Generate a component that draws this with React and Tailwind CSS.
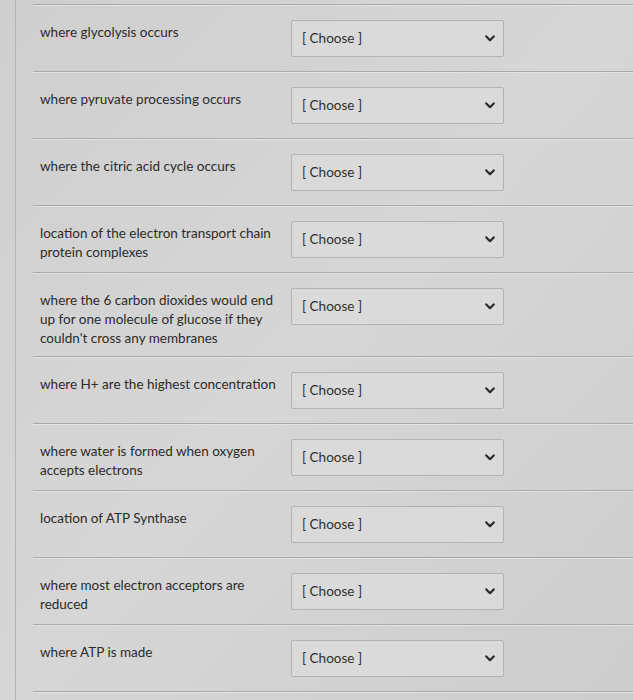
import React from 'react';

const questions = [
    'where glycolysis occurs',
    'where pyruvate processing occurs',
    'where the citric acid cycle occurs',
    'location of the electron transport chain protein complexes',
    "where the 6 carbon dioxides would end up for one molecule of glucose if they couldn't cross any membranes",
    'where H+ are the highest concentration',
    'where water is formed when oxygen accepts electrons',
    'location of ATP Synthase',
    'where most electron acceptors are reduced',
    'where ATP is made',
];

const Chevron = () => (
    <svg width="10" height="7" viewBox="0 0 10 7" className="shrink-0">
        <path d="M1.3 1.4 L5 5.2 L8.7 1.4" fill="none" stroke="#2a2a2a" strokeWidth="2.2" strokeLinecap="round" strokeLinejoin="round" />
    </svg>
);

const Row = ({ label }) => (
    <div className="flex items-start min-h-[67px] pt-[15px] pb-[8px] pl-[7px] border-b border-[#a9a9a9] shadow-[0_1px_0_#e4e4e4]">
        <div className="w-[246px] pt-[3px] pr-1 text-[13.5px] leading-[19px] text-[#2b2b2b]">{label}</div>
        <div className="ml-[5px] w-[213px] h-[37px] flex items-center justify-between pl-[10px] pr-[8px] border border-[#b3b3b3] bg-[#dadada] rounded-[2px] text-[13.5px] text-[#2f2f2f]">
            <span>[ Choose ]</span>
            <Chevron />
        </div>
    </div>
);

export default function App() {
    return (
        <div className="w-[633px] h-[700px] overflow-hidden bg-gradient-to-br from-[#cfcfcf] via-[#d6d6d6] to-[#cdcdcd]" style={{ fontFamily: 'Lato, "Open Sans", sans-serif' }}>
            <div className="ml-[15px] h-full border-l border-[#b4b4b4] pl-[17px]">
                <div className="h-[5px] border-b border-[#a9a9a9] shadow-[0_1px_0_#e4e4e4]" />
                {questions.map((q) => (
                    <Row key={q} label={q} />
                ))}
            </div>
        </div>
    );
}
